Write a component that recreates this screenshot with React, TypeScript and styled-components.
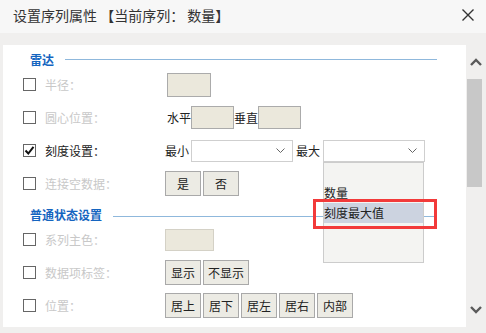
import styled, { createGlobalStyle } from "styled-components";

const GlobalStyle = createGlobalStyle`
  html, body {
    margin: 0;
    padding: 0;
    background: #f0efee;
  }
  body {
    font-family: "Noto Sans CJK SC", "Noto Sans", sans-serif;
  }
`;

const Dialog = styled.div`
  width: 486px;
  height: 333px;
  background: #f0efee;
  overflow: hidden;
`;

const TitleBar = styled.div`
  height: 33px;
  background: #f7f7f7;
  display: flex;
  align-items: center;
  justify-content: space-between;
  padding: 0 12px 0 13px;
  box-sizing: border-box;
`;

const Title = styled.div`
  font-size: 14px;
  color: #333;
  line-height: 1;
  padding-bottom: 4px;
`;

const CloseBtn = styled.button`
  border: 0;
  background: none;
  padding: 0;
  width: 12px;
  height: 12px;
  margin-bottom: 4px;
  display: flex;
`;

const Body = styled.div`
  display: flex;
  padding: 12px 0 0 3px;
  height: 300px;
  box-sizing: border-box;
`;

const Panel = styled.div`
  position: relative;
  width: 463px;
  height: 282px;
  background: #fff;
  overflow: hidden;
`;

const SectionHead = styled.div`
  height: 23px;
  display: flex;
  align-items: flex-end;
  padding-left: 27px;
  padding-right: 29px;
`;

const SectionTitle = styled.span`
  font-size: 12px;
  font-weight: bold;
  color: #1565c0;
  line-height: 17px;
`;

const SectionLine = styled.div<{ $drop?: number }>`
  flex: 1;
  height: 1px;
  background: #8fb8dc;
  margin-left: 11px;
  margin-bottom: ${(p) => 8 - (p.$drop || 0)}px;
`;

const Row = styled.div`
  height: 33px;
  display: flex;
  align-items: center;
  padding-left: 20px;
`;

const Check = styled.span`
  width: 11px;
  height: 11px;
  border: 1px solid #666;
  background: #fff;
  display: flex;
  align-items: center;
  justify-content: center;
  flex-shrink: 0;
`;

const Label = styled.span<{ $on?: boolean }>`
  width: 120px;
  margin-left: 9px;
  font-size: 12px;
  color: ${(p) => (p.$on ? "#222" : "#c8c8c8")};
  white-space: nowrap;
`;

const Controls = styled.div`
  display: flex;
  align-items: center;
`;

const Text = styled.span<{ $ml?: number }>`
  font-size: 12px;
  color: #222;
  margin-left: ${(p) => p.$ml || 0}px;
`;

const ColorBox = styled.span<{ $w: number; $h: number; $ml?: number; $light?: boolean }>`
  display: block;
  width: ${(p) => p.$w}px;
  height: ${(p) => p.$h}px;
  margin-left: ${(p) => p.$ml || 0}px;
  background: #ebe8dc;
  border: 1px solid ${(p) => (p.$light ? "#d4d1c6" : "#ababab")};
  box-sizing: border-box;
`;

const Select = styled.div<{ $ml?: number }>`
  width: 102px;
  height: 22px;
  margin-left: ${(p) => p.$ml || 0}px;
  border: 1px solid #cfcfcf;
  background: #fff;
  box-sizing: border-box;
  display: flex;
  align-items: center;
  justify-content: flex-end;
  padding-right: 7px;
`;

const BtnGroup = styled.div`
  display: flex;
  gap: 2px;
`;

const Btn = styled.button`
  height: 25px;
  min-width: 36px;
  padding: 0 4px;
  background: #ecebe4;
  border: 1px solid #a9a9a9;
  font-family: inherit;
  font-size: 12px;
  color: #222;
  box-sizing: border-box;
  display: flex;
  align-items: center;
  justify-content: center;
`;

const DropList = styled.div`
  position: absolute;
  left: 320px;
  top: 117px;
  width: 101px;
  height: 101px;
  background: #f4f4f2;
  border: 1px solid #cccccc;
  box-sizing: border-box;
  padding-top: 20px;
`;

const DropItem = styled.div<{ $active?: boolean }>`
  height: 20px;
  line-height: 20px;
  font-size: 12px;
  color: #222;
  background: ${(p) => (p.$active ? "#ccd3e0" : "transparent")};
`;

const Highlight = styled.div`
  position: absolute;
  left: 310px;
  top: 154px;
  width: 124px;
  height: 30px;
  border: 3px solid #f23a3a;
  box-sizing: border-box;
`;

const ScrollBar = styled.div`
  width: 20px;
  height: 282px;
  display: flex;
  flex-direction: column;
  align-items: center;
`;

const Arrow = styled.div`
  height: 34px;
  display: flex;
  align-items: center;
  justify-content: center;
  width: 100%;
`;

const Thumb = styled.div`
  width: 15px;
  height: 108px;
  background: #c8c8c8;
  margin-left: -3px;
`;

const Track = styled.div`
  flex: 1;
`;

const Chevron = ({ up }: { up?: boolean }) => (
  <svg width="12" height="8" viewBox="0 0 12 8">
    <polyline
      points={up ? "1,7 6,2 11,7" : "1,1 6,6 11,1"}
      fill="none"
      stroke="#5a5a5a"
      strokeWidth="2.4"
    />
  </svg>
);

const SelectArrow = () => (
  <svg width="9" height="5" viewBox="0 0 9 5">
    <polyline points="0.5,0.5 4.5,4.5 8.5,0.5" fill="none" stroke="#666" strokeWidth="1" />
  </svg>
);

const Tick = () => (
  <svg width="11" height="11" viewBox="0 0 11 11">
    <polyline points="1.5,5.5 4.3,8.5 9.5,1.8" fill="none" stroke="#111" strokeWidth="2" />
  </svg>
);

const App = () => {
  return (
    <Dialog>
      <GlobalStyle />
      <TitleBar>
        <Title>设置序列属性 【当前序列： 数量】</Title>
        <CloseBtn>
          <svg width="12" height="12" viewBox="0 0 12 12">
            <path d="M0.5 0.5 L11.5 11.5 M11.5 0.5 L0.5 11.5" stroke="#333" strokeWidth="1.4" />
          </svg>
        </CloseBtn>
      </TitleBar>
      <Body>
        <Panel>
          <SectionHead>
            <SectionTitle>雷达</SectionTitle>
            <SectionLine />
          </SectionHead>
          <Row>
            <Check />
            <Label>半径：</Label>
            <Controls>
              <ColorBox $w={44} $h={24} $ml={2} />
            </Controls>
          </Row>
          <Row>
            <Check />
            <Label>圆心位置：</Label>
            <Controls>
              <Text $ml={2}>水平</Text>
              <ColorBox $w={43} $h={23} />
              <Text>垂直</Text>
              <ColorBox $w={43} $h={23} />
            </Controls>
          </Row>
          <Row>
            <Check>
              <Tick />
            </Check>
            <Label $on>刻度设置：</Label>
            <Controls>
              <Text>最小</Text>
              <Select $ml={2}>
                <SelectArrow />
              </Select>
              <Text $ml={3}>最大</Text>
              <Select $ml={3}>
                <SelectArrow />
              </Select>
            </Controls>
          </Row>
          <Row>
            <Check />
            <Label>连接空数据：</Label>
            <BtnGroup>
              <Btn>是</Btn>
              <Btn>否</Btn>
            </BtnGroup>
          </Row>
          <SectionHead>
            <SectionTitle>普通状态设置</SectionTitle>
            <SectionLine $drop={2} />
          </SectionHead>
          <Row>
            <Check />
            <Label>系列主色：</Label>
            <Controls>
              <ColorBox $w={49} $h={22} $light />
            </Controls>
          </Row>
          <Row>
            <Check />
            <Label>数据项标签：</Label>
            <BtnGroup>
              <Btn>显示</Btn>
              <Btn>不显示</Btn>
            </BtnGroup>
          </Row>
          <Row>
            <Check />
            <Label>位置：</Label>
            <BtnGroup>
              <Btn>居上</Btn>
              <Btn>居下</Btn>
              <Btn>居左</Btn>
              <Btn>居右</Btn>
              <Btn>内部</Btn>
            </BtnGroup>
          </Row>
          <DropList>
            <DropItem>数量</DropItem>
            <DropItem $active>刻度最大值</DropItem>
          </DropList>
          <Highlight />
        </Panel>
        <ScrollBar>
          <Arrow>
            <Chevron up />
          </Arrow>
          <Thumb />
          <Track />
          <Arrow>
            <Chevron />
          </Arrow>
        </ScrollBar>
      </Body>
    </Dialog>
  );
};

export default App;
